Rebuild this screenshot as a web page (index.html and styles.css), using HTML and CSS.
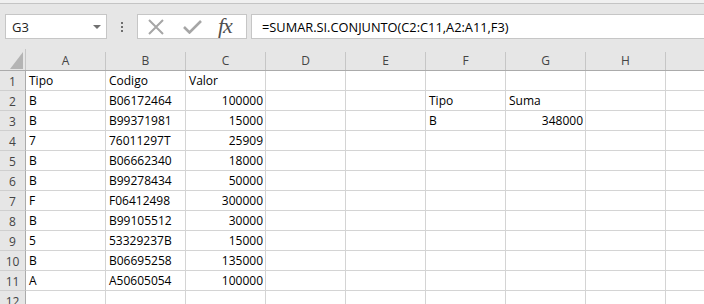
FILE: index.html
```html
<!DOCTYPE html>
<html lang="es">
<head>
    <meta charset="UTF-8">
    <title>Libro1 - Excel</title>
    <link rel="stylesheet" href="styles.css">
</head>
<body>
    <div class="topline"></div>

    <div class="formula-row">
        <div class="namebox">
            <span>G3</span>
            <span class="caret"></span>
        </div>
        <div class="grip"><i></i><i></i><i></i></div>
        <div class="fx-buttons">
            <svg class="ico" width="18" height="16" viewBox="0 0 18 16">
                <path d="M2 1 L16 15 M16 1 L2 15" stroke="#a6a6a6" stroke-width="2" fill="none"/>
            </svg>
            <svg class="ico" width="19" height="14" viewBox="0 0 19 14">
                <path d="M1 7 L6.5 12.5 L18 1" stroke="#a6a6a6" stroke-width="2.6" fill="none"/>
            </svg>
            <span class="fx">fx</span>
        </div>
        <div class="formula">=SUMAR.SI.CONJUNTO(C2:C11,A2:A11,F3)</div>
    </div>

    <div class="sheet">
        <div class="row head">
            <div class="corner">
                <svg width="13" height="17" viewBox="0 0 13 17"><polygon points="13,0 13,17 0,17" fill="#b4b4b4"/></svg>
            </div>
            <div class="ch">A</div><div class="ch">B</div><div class="ch">C</div><div class="ch">D</div><div class="ch">E</div><div class="ch">F</div><div class="ch">G</div><div class="ch">H</div><div class="ch"></div>
        </div>
        <div class="row"><div class="rh">1</div><div class="c">Tipo</div><div class="c">Codigo</div><div class="c">Valor</div><div class="c"></div><div class="c"></div><div class="c"></div><div class="c"></div><div class="c"></div><div class="c"></div></div>
        <div class="row"><div class="rh">2</div><div class="c">B</div><div class="c">B06172464</div><div class="c n">100000</div><div class="c"></div><div class="c"></div><div class="c">Tipo</div><div class="c">Suma</div><div class="c"></div><div class="c"></div></div>
        <div class="row"><div class="rh">3</div><div class="c">B</div><div class="c">B99371981</div><div class="c n">15000</div><div class="c"></div><div class="c"></div><div class="c">B</div><div class="c n">348000</div><div class="c"></div><div class="c"></div></div>
        <div class="row"><div class="rh">4</div><div class="c">7</div><div class="c">76011297T</div><div class="c n">25909</div><div class="c"></div><div class="c"></div><div class="c"></div><div class="c"></div><div class="c"></div><div class="c"></div></div>
        <div class="row"><div class="rh">5</div><div class="c">B</div><div class="c">B06662340</div><div class="c n">18000</div><div class="c"></div><div class="c"></div><div class="c"></div><div class="c"></div><div class="c"></div><div class="c"></div></div>
        <div class="row"><div class="rh">6</div><div class="c">B</div><div class="c">B99278434</div><div class="c n">50000</div><div class="c"></div><div class="c"></div><div class="c"></div><div class="c"></div><div class="c"></div><div class="c"></div></div>
        <div class="row"><div class="rh">7</div><div class="c">F</div><div class="c">F06412498</div><div class="c n">300000</div><div class="c"></div><div class="c"></div><div class="c"></div><div class="c"></div><div class="c"></div><div class="c"></div></div>
        <div class="row"><div class="rh">8</div><div class="c">B</div><div class="c">B99105512</div><div class="c n">30000</div><div class="c"></div><div class="c"></div><div class="c"></div><div class="c"></div><div class="c"></div><div class="c"></div></div>
        <div class="row"><div class="rh">9</div><div class="c">5</div><div class="c">53329237B</div><div class="c n">15000</div><div class="c"></div><div class="c"></div><div class="c"></div><div class="c"></div><div class="c"></div><div class="c"></div></div>
        <div class="row"><div class="rh">10</div><div class="c">B</div><div class="c">B06695258</div><div class="c n">135000</div><div class="c"></div><div class="c"></div><div class="c"></div><div class="c"></div><div class="c"></div><div class="c"></div></div>
        <div class="row"><div class="rh">11</div><div class="c">A</div><div class="c">A50605054</div><div class="c n">100000</div><div class="c"></div><div class="c"></div><div class="c"></div><div class="c"></div><div class="c"></div><div class="c"></div></div>
        <div class="row"><div class="rh">12</div><div class="c"></div><div class="c"></div><div class="c"></div><div class="c"></div><div class="c"></div><div class="c"></div><div class="c"></div><div class="c"></div><div class="c"></div></div>
    </div>
</body>
</html>
```

FILE: styles.css
```css
body {
    margin: 0;
    width: 704px;
    height: 304px;
    overflow: hidden;
    background-color: #e6e6e6;
    font-family: "Open Sans", "Liberation Sans", sans-serif;
    font-size: 12px;
    color: #000;
}

.topline {
    height: 3px;
    background-color: #f0f0f0;
    border-bottom: 1px solid #c4c4c4;
}

.formula-row {
    display: flex;
    height: 25px;
    margin-top: 10px;
    margin-bottom: 10px;
    padding-left: 5px;
}

.namebox {
    box-sizing: border-box;
    width: 102px;
    background-color: #fff;
    border: 1px solid #c6c6c6;
    display: flex;
    align-items: center;
    justify-content: space-between;
    padding: 0 5px 0 6px;
    color: #222;
    font-size: 13px;
}

.caret {
    width: 0;
    height: 0;
    border-left: 4px solid transparent;
    border-right: 4px solid transparent;
    border-top: 4px solid #707070;
}

.grip {
    width: 30px;
    display: flex;
    flex-direction: column;
    align-items: center;
    justify-content: center;
    gap: 2px;
}

.grip i {
    width: 2px;
    height: 2px;
    background-color: #6e6e6e;
}

.fx-buttons {
    box-sizing: border-box;
    width: 110px;
    background-color: #fff;
    border: 1px solid #c6c6c6;
    display: flex;
    align-items: center;
    padding-left: 9px;
    gap: 18px;
}

.fx {
    font-family: "Liberation Serif", serif;
    font-style: italic;
    font-size: 22px;
    color: #505050;
    margin-left: -2px;
    margin-top: -2px;
    letter-spacing: -1px;
}

.formula {
    flex-grow: 1;
    margin-left: 4px;
    background-color: #fff;
    border: 1px solid #c6c6c6;
    border-right: none;
    display: flex;
    align-items: center;
    padding-left: 10px;
    font-size: 12.8px;
}

.sheet {
    background-color: #fff;
    width: 704px;
    overflow: hidden;
}

.row {
    display: flex;
    height: 20px;
}

.row.head {
    box-sizing: border-box;
    height: 22px;
    background-color: #e6e6e6;
    border-bottom: 1px solid #ababab;
}

.corner {
    box-sizing: border-box;
    width: 26px;
    flex-shrink: 0;
    border-right: 1px solid #c6c6c6;
    display: flex;
    align-items: flex-end;
    justify-content: flex-end;
    padding: 0 2px 1px 0;
}

.ch {
    box-sizing: border-box;
    width: 80px;
    flex-shrink: 0;
    text-align: center;
    color: #444;
    border-right: 1px solid #c6c6c6;
    margin-top: 3px;
    line-height: 18px;
}

.rh {
    box-sizing: border-box;
    width: 26px;
    flex-shrink: 0;
    background-color: #e6e6e6;
    border-right: 1px solid #ababab;
    border-bottom: 1px solid #cfcfcf;
    text-align: center;
    color: #444;
    line-height: 19px;
    padding-top: 1px;
}

.c {
    box-sizing: border-box;
    width: 80px;
    flex-shrink: 0;
    border-right: 1px solid #d4d4d4;
    border-bottom: 1px solid #d4d4d4;
    padding: 0 2px 1px 3px;
    display: flex;
    align-items: flex-end;
    line-height: 16px;
    white-space: nowrap;
}

.c.n {
    justify-content: flex-end;
}
```
